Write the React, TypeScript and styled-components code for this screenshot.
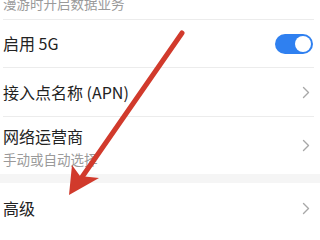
import * as React from 'react';
import styled, { createGlobalStyle } from 'styled-components';

const GlobalStyle = createGlobalStyle`
    html, body {
        margin: 0;
        padding: 0;
        background: #ffffff;
    }
    body {
        font-family: "Noto Sans CJK SC", "Noto Sans", sans-serif;
        color: #222222;
    }
`;

function Chevron() {
    return (
        <svg width="8" height="13" viewBox="0 0 8 13">
            <path d="M1.5 1.5 L6.5 6.5 L1.5 11.5" fill="none" stroke="#a8a8a8" strokeWidth="1.4" strokeLinecap="round" strokeLinejoin="round" />
        </svg>
    );
}

function RedArrow() {
    return (
        <ArrowLayer width="320" height="240" viewBox="0 0 320 240">
            <line x1="182" y1="33" x2="80" y2="180" stroke="#d13a2c" strokeWidth="5" strokeLinecap="round" />
            <polygon points="69,195 72,165 80,176 99,178" fill="#d13a2c" />
        </ArrowLayer>
    );
}

export default function App() {
    return (
        <>
            <GlobalStyle />
            <Screen>
                <TopRow>
                    <SubText>漫游时开启数据业务</SubText>
                </TopRow>
                <Divider />
                <Row $height={47}>
                    <Title>启用 5G</Title>
                    <Toggle>
                        <Knob />
                    </Toggle>
                </Row>
                <Divider />
                <Row $height={48}>
                    <Title>接入点名称 (APN)</Title>
                    <ChevronBox><Chevron /></ChevronBox>
                </Row>
                <Divider />
                <Row $height={57}>
                    <TextStack>
                        <Title>网络运营商</Title>
                        <SubText>手动或自动选择</SubText>
                    </TextStack>
                    <ChevronBox><Chevron /></ChevronBox>
                </Row>
                <Band />
                <Row $height={50}>
                    <Title>高级</Title>
                    <ChevronBox><Chevron /></ChevronBox>
                </Row>
                <RedArrow />
            </Screen>
        </>
    );
}

const Screen = styled.div`
    position: relative;
    width: 320px;
    height: 240px;
    overflow: hidden;
    background: #ffffff;
`;

const TopRow = styled.div`
    height: 19px;
    padding: 0 0 7px 3px;
    box-sizing: border-box;
    display: flex;
    align-items: flex-end;
    overflow: hidden;
`;

const Divider = styled.div`
    height: 1px;
    margin: 0 6px 0 3px;
    background: #ececec;
`;

const Row = styled.div<{ $height: number }>`
    height: ${p => p.$height}px;
    padding: 0 8px 0 3px;
    display: flex;
    align-items: center;
    justify-content: space-between;
`;

const TextStack = styled.div`
    display: flex;
    flex-direction: column;
    gap: 3px;
    margin-top: 3px;
`;

const Title = styled.div`
    font-size: 16px;
    line-height: 21px;
    color: #222222;
    white-space: nowrap;
`;

const SubText = styled.div`
    font-size: 13.5px;
    line-height: 18px;
    color: #9a9a9a;
    white-space: nowrap;
`;

const Toggle = styled.div`
    width: 38px;
    height: 20px;
    border-radius: 10px;
    background: #2f80f0;
    display: flex;
    align-items: center;
    justify-content: flex-end;
    padding: 0 2px;
    box-sizing: border-box;
    margin-right: -1px;
`;

const Knob = styled.div`
    width: 16px;
    height: 16px;
    border-radius: 50%;
    background: #ffffff;
`;

const ChevronBox = styled.div`
    display: flex;
    align-items: center;
    margin-right: 2px;
`;

const Band = styled.div`
    height: 9px;
    background: #f5f5f5;
`;

const ArrowLayer = styled.svg`
    position: absolute;
    left: 0;
    top: 0;
    pointer-events: none;
`;
